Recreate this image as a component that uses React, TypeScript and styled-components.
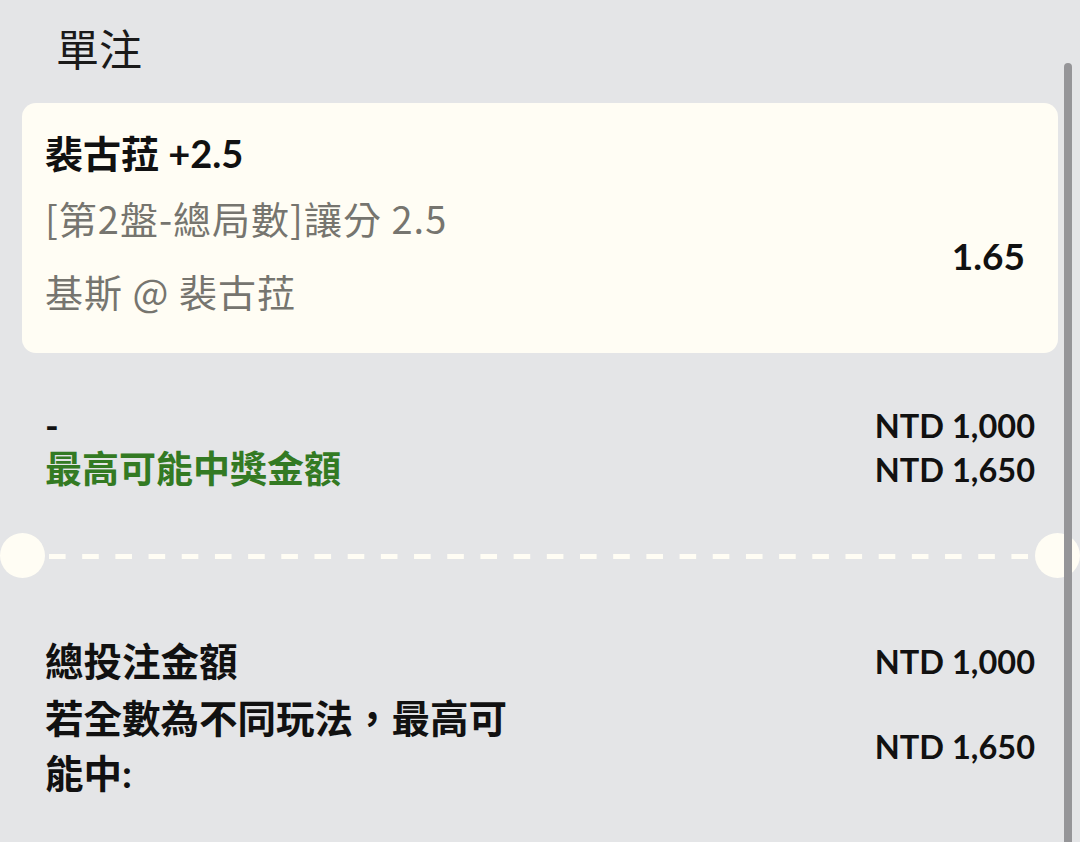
import styled, { createGlobalStyle } from "styled-components";

const GlobalStyle = createGlobalStyle`
    html, body {
        margin: 0;
        padding: 0;
        background: #e4e5e7;
    }
    body {
        font-family: "Lato", "Noto Sans CJK TC", sans-serif;
        color: #111111;
    }
`

const Page = styled.div`
    position: relative;
    width: 1080px;
    height: 842px;
    overflow: hidden;
    box-sizing: border-box;
    padding: 0 22px;
`

const Header = styled.div`
    padding: 19px 0 0 34px;
    height: 56px;
    line-height: 56px;
    font-size: 43px;
    font-family: "Noto Sans CJK TC", sans-serif;
    color: #1a1a1a;
`

const Card = styled.div`
    margin-top: 28px;
    height: 250px;
    box-sizing: border-box;
    padding: 25px 33px 0 23px;
    background: #fffdf4;
    border-radius: 14px;
`

const Selection = styled.div`
    font-size: 38px;
    line-height: 50px;
    font-weight: 700;
    color: #111111;
`

const CardBody = styled.div`
    margin-top: 3px;
    display: flex;
    align-items: center;
    justify-content: space-between;
`

const Details = styled.div`
    display: flex;
    flex-direction: column;
`

const DetailLine = styled.div`
    font-family: "Noto Sans CJK TC", sans-serif;
    font-size: 38px;
    letter-spacing: 1px;
    line-height: 73px;
    color: #76756f;
`

const Odds = styled.div`
    font-size: 37px;
    font-weight: 700;
    color: #111111;
    margin-top: 3px;
`

const Summary = styled.div`
    margin-top: 50px;
    padding: 0 23px;
`

const Row = styled.div<{ $height?: number }>`
    display: flex;
    align-items: center;
    justify-content: space-between;
    min-height: ${props => props.$height || 44}px;
`

const Label = styled.div<{ $green?: boolean }>`
    font-size: 37px;
    font-weight: 700;
    line-height: 44px;
    color: ${props => props.$green ? "#337a23" : "#111111"};
`

const Amount = styled.div`
    font-size: 32.5px;
    font-weight: 700;
    color: #111111;
    white-space: nowrap;
`

const Divider = styled.div`
    position: relative;
    margin-top: 42px;
    height: 45px;
    display: flex;
    align-items: center;

    &::before, &::after {
        content: "";
        position: absolute;
        top: 0;
        width: 45px;
        height: 45px;
        border-radius: 50%;
        background: #fffdf4;
    }
    &::before {
        left: -22px;
    }
    &::after {
        right: -22px;
    }
`

const Dashes = styled.div`
    flex: 1;
    margin: 2px 27px 0 27px;
    height: 5px;
    background-image: linear-gradient(to right, #fffdf4 0 17px, transparent 17px);
    background-size: 33.2px 100%;
    background-repeat: repeat-x;
`

const Totals = styled.div`
    margin-top: 56px;
    padding: 0 23px;
    display: flex;
    flex-direction: column;
    gap: 2px;
`

const TotalLabel = styled.div`
    max-width: 480px;
    font-size: 38.5px;
    font-weight: 700;
    line-height: 55px;
    color: #111111;
`

const Scrollbar = styled.div`
    position: absolute;
    top: 63px;
    right: 8px;
    bottom: 0;
    width: 8px;
    border-radius: 4px 4px 0 0;
    background: #959598;
`

function App() {
    return (
        <Page>
            <GlobalStyle />
            <Header>單注</Header>
            <Card>
                <Selection>裴古菈 +2.5</Selection>
                <CardBody>
                    <Details>
                        <DetailLine>[第2盤-總局數]讓分 2.5</DetailLine>
                        <DetailLine>基斯 @ 裴古菈</DetailLine>
                    </Details>
                    <Odds>1.65</Odds>
                </CardBody>
            </Card>
            <Summary>
                <Row>
                    <Label>-</Label>
                    <Amount>NTD 1,000</Amount>
                </Row>
                <Row>
                    <Label $green>最高可能中獎金額</Label>
                    <Amount>NTD 1,650</Amount>
                </Row>
            </Summary>
            <Divider>
                <Dashes />
            </Divider>
            <Totals>
                <Row $height={54}>
                    <TotalLabel>總投注金額</TotalLabel>
                    <Amount>NTD 1,000</Amount>
                </Row>
                <Row>
                    <TotalLabel>若全數為不同玩法，最高可能中:</TotalLabel>
                    <Amount>NTD 1,650</Amount>
                </Row>
            </Totals>
            <Scrollbar />
        </Page>
    )
}

export default App;
